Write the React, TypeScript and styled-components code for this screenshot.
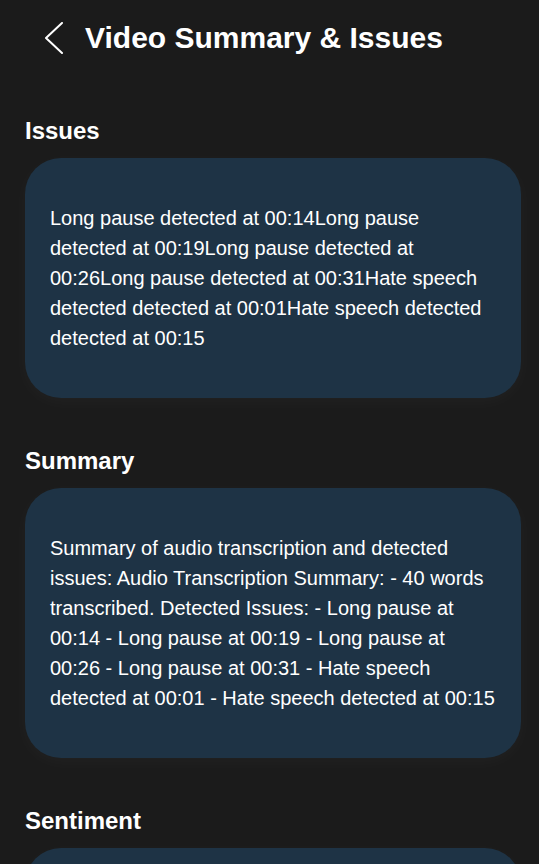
import styled, { createGlobalStyle } from "styled-components";

const GlobalStyle = createGlobalStyle`
  html, body {
    margin: 0;
    padding: 0;
    background-color: #1b1b1b;
    font-family: "Liberation Sans", Arial, sans-serif;
    color: #ffffff;
  }
`;

const issues = [
  "Long pause detected at 00:14",
  "Long pause detected at 00:19",
  "Long pause detected at 00:26",
  "Long pause detected at 00:31",
  "Hate speech detected detected at 00:01",
  "Hate speech detected detected at 00:15",
];

const summary =
  "Summary of audio transcription and detected issues: Audio Transcription Summary: - 40 words transcribed. Detected Issues: - Long pause at 00:14 - Long pause at 00:19 - Long pause at 00:26 - Long pause at 00:31 - Hate speech detected at 00:01 - Hate speech detected at 00:15";

export default function App() {
  return (
    <>
      <GlobalStyle />
      <Page>
        <Header>
          <BackButton aria-label="Back">
            <svg width="19" height="32" viewBox="0 0 19 32" fill="none">
              <path
                d="M17 1 L1 16 L17 31"
                stroke="#ffffff"
                strokeWidth="2"
                strokeLinecap="round"
                strokeLinejoin="round"
              />
            </svg>
          </BackButton>
          <Title>Video Summary &amp; Issues</Title>
        </Header>

        <Content>
          <Section>
            <SectionTitle>Issues</SectionTitle>
            <Card>
              <CardText>{issues.join("")}</CardText>
            </Card>
          </Section>

          <Section>
            <SectionTitle>Summary</SectionTitle>
            <Card>
              <CardText>{summary}</CardText>
            </Card>
          </Section>

          <Section>
            <SectionTitle>Sentiment</SectionTitle>
            <Card>
              <CardText>Overall sentiment: Negative</CardText>
            </Card>
          </Section>
        </Content>
      </Page>
    </>
  );
}

const Page = styled.div`
  display: flex;
  flex-direction: column;
  min-height: 100vh;
`;

const Header = styled.header`
  display: flex;
  align-items: center;
  gap: 21px;
  padding: 20px 25px 0 45px;
  height: 36px;
`;

const BackButton = styled.button`
  display: flex;
  align-items: center;
  justify-content: center;
  padding: 0;
  background: none;
  border: none;
  cursor: pointer;
`;

const Title = styled.h1`
  margin: 0;
  font-size: 30px;
  line-height: 36px;
  font-weight: bold;
`;

const Content = styled.main`
  display: flex;
  flex-direction: column;
  gap: 49px;
  padding: 61px 18px 0 25px;
`;

const Section = styled.section`
  display: flex;
  flex-direction: column;
  gap: 13px;
`;

const SectionTitle = styled.h2`
  margin: 0;
  font-size: 24px;
  line-height: 28px;
  font-weight: bold;
`;

const Card = styled.div`
  background-color: #1e3345;
  border-radius: 36px;
  padding: 25px;
  box-shadow: 0 4px 18px rgba(255, 255, 255, 0.03);
`;

const CardText = styled.p`
  margin: 20px 0;
  font-size: 20px;
  line-height: 30px;
`;
